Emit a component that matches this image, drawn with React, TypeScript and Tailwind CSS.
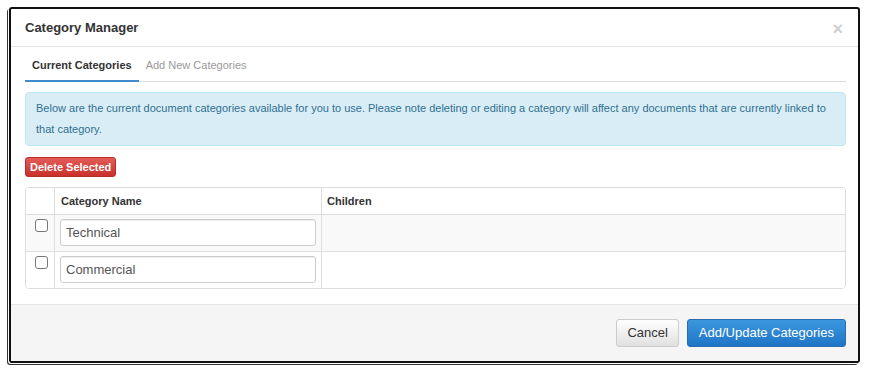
import React from "react";

const font = { fontFamily: "'Liberation Sans', Arial, Helvetica, sans-serif" };

function Checkbox() {
  return (
    <div className="w-[13px] h-[13px] rounded-[3px] border border-[#767676] bg-white" />
  );
}

function Row({ value, striped }: { value: string; striped?: boolean }) {
  return (
    <div className={`grid grid-cols-[29px_267px_1fr] h-[37px] border-t border-[#dddddd] ${striped ? "bg-[#f9f9f9]" : "bg-white"}`}>
      <div className="border-r border-[#dddddd] pl-[9px] pt-[4px]">
        <Checkbox />
      </div>
      <div className="border-r border-[#dddddd] pl-[5px] pr-[5px] pt-[4px]">
        <div className="h-[27px] rounded-[3px] border border-[#cccccc] bg-white pl-[5px] flex items-center text-[13px] text-[#555555] shadow-[inset_0_1px_1px_rgba(0,0,0,0.075)]">
          {value}
        </div>
      </div>
      <div />
    </div>
  );
}

export default function App() {
  return (
    <div className="w-[877px] h-[383px] bg-white pt-[7px] pl-[9px]" style={font}>
      <div className="w-[851px] h-[356px] border-2 border-[#111111] rounded-[3px] bg-white flex flex-col overflow-hidden shadow-[-1px_1px_0_0_#ffffff,-2px_2px_0_0_#333333]">
        {/* header */}
        <div className="h-[38px] shrink-0 border-b border-[#e5e5e5] flex items-center justify-between pl-[14px] pr-[15px]">
          <div className="text-[13px] font-bold text-[#333333] leading-none">Category Manager</div>
          <div className="text-[18px] font-bold text-[#cfcfcf] leading-none pt-[2px]">×</div>
        </div>
        {/* body */}
        <div className="flex-1 pt-[10px] pl-[14px] pr-[12px]">
          <div className="flex border-b border-[#dddddd]">
            <div className="px-[7px] pb-[7px] border-b-2 border-[#428bca] -mb-px text-[11px] leading-[16px] font-bold text-[#333333]">
              Current Categories
            </div>
            <div className="px-[7px] pb-[7px] text-[11px] leading-[16px] text-[#999999]">
              Add New Categories
            </div>
          </div>
          <div className="mt-[10px] rounded-[4px] border border-[#bce8f1] bg-[#d9edf7] px-[10px] py-[5px] text-[11px] leading-[21px] text-[#31708f]">
            Below are the current document categories available for you to use. Please note deleting or editing a category will affect any documents that are currently linked to that category.
          </div>
          <div className="mt-[11px] flex">
            <div className="h-[20px] px-[4px] rounded-[3px] border border-[#b92c28] bg-gradient-to-b from-[#e35b57] to-[#c9302c] text-white text-[11px] font-bold flex items-center">
              Delete Selected
            </div>
          </div>
          <div className="mt-[10px] border border-[#dddddd] rounded-[4px] overflow-hidden">
            <div className="grid grid-cols-[29px_267px_1fr] h-[26px] bg-white text-[11px] font-bold text-[#333333]">
              <div className="border-r border-[#dddddd]" />
              <div className="border-r border-[#dddddd] pl-[6px] flex items-center">Category Name</div>
              <div className="pl-[5px] flex items-center">Children</div>
            </div>
            <Row value="Technical" striped />
            <Row value="Commercial" />
          </div>
        </div>
        {/* footer */}
        <div className="h-[57px] shrink-0 border-t border-[#e5e5e5] bg-[#f5f5f5] flex justify-end items-start pt-[14px] pr-[12px] gap-[8px]">
          <div className="h-[28px] px-[10px] rounded-[3px] border border-[#cccccc] bg-gradient-to-b from-[#ffffff] to-[#e0e0e0] text-[13px] text-[#333333] flex items-center">
            Cancel
          </div>
          <div className="h-[28px] px-[11px] rounded-[3px] border border-[#2a6cb0] bg-gradient-to-b from-[#3c97de] to-[#1f75c6] text-[13px] text-white flex items-center">
            Add/Update Categories
          </div>
        </div>
      </div>
    </div>
  );
}
